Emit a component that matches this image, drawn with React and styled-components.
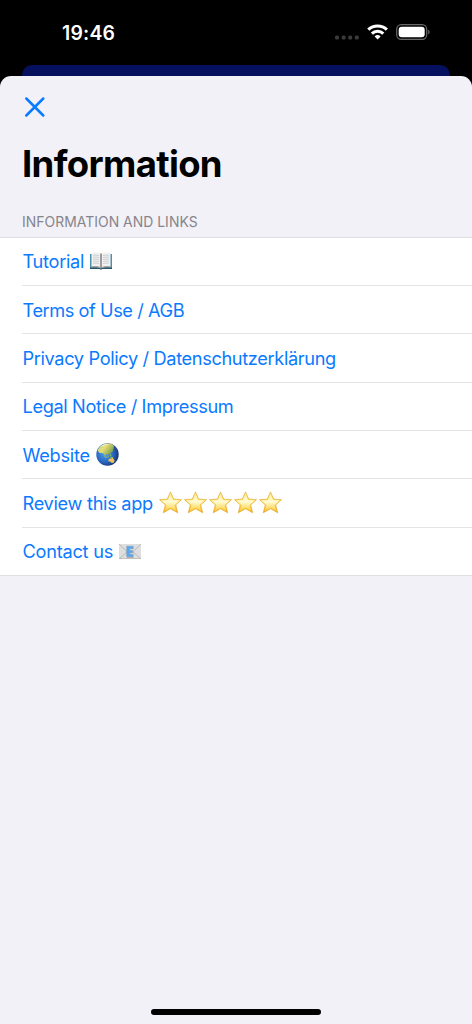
import styled, { createGlobalStyle } from "styled-components";

const GlobalStyle = createGlobalStyle`
  * {
    box-sizing: border-box;
  }
  body {
    margin: 0;
    background: #000;
    font-family: Inter, "Liberation Sans", sans-serif;
  }
`;

const Screen = styled.div`
  height: 1024px;
  display: flex;
  flex-direction: column;
  background: #000;
  overflow: hidden;
`;

const StatusBar = styled.header`
  height: 65px;
  flex: none;
  display: flex;
  align-items: flex-start;
  justify-content: space-between;
  padding: 21px 41px 0 62px;
`;

const Time = styled.span`
  color: #fff;
  font-size: 19.4px;
  font-weight: 600;
  line-height: 24px;
  letter-spacing: 0.2px;
`;

const StatusIcons = styled.svg`
  width: 97px;
  height: 20px;
  margin-top: 1px;
`;

const PreviousPage = styled.div`
  height: 11px;
  flex: none;
  margin: 0 22px;
  background: #05105f;
  border-radius: 10px 10px 0 0;
`;

const Sheet = styled.main`
  flex: 1;
  display: flex;
  flex-direction: column;
  background: #f2f1f7;
  border-radius: 11px 11px 0 0;
`;

const CloseButton = styled.button`
  width: 22px;
  height: 22px;
  margin: 20px 0 0 24px;
  padding: 0;
  border: 0;
  background: none;
  cursor: pointer;

  svg {
    display: block;
  }
`;

const Title = styled.h1`
  margin: 22px 0 0 22px;
  color: #000;
  font-size: 36.5px;
  font-weight: 700;
  line-height: 48px;
  letter-spacing: -0.65px;
`;

const SectionTitle = styled.h2`
  margin: 24px 0 5px 22px;
  color: #85858b;
  font-size: 13.9px;
  font-weight: 400;
  line-height: 20px;
  letter-spacing: 0.04px;
  text-transform: uppercase;
`;

const List = styled.ul`
  margin: 0;
  padding: 0 0 0 22px;
  list-style: none;
  background: #fff;
  border-top: 1px solid #dfdfe3;
  border-bottom: 1px solid #dfdfe3;
`;

const Row = styled.li`
  height: 48.28px;
  display: flex;
  align-items: center;

  &:first-child {
    height: 47.2px;
    padding-bottom: 1px;
  }

  & + & {
    border-top: 1px solid #e4e4e7;
  }
`;

const Link = styled.a`
  display: flex;
  align-items: center;
  gap: 6px;
  padding-left: 0.5px;
  color: #0a7aff;
  font-size: 18.2px;
  line-height: 24px;
  letter-spacing: ${(props) => props.$tracking || -0.25}px;
  white-space: pre;
  text-decoration: none;
  cursor: pointer;

  svg {
    flex: none;
  }
`;

const Stars = styled.span`
  display: flex;
  gap: 2.1px;
`;

const HomeIndicator = styled.div`
  width: 170px;
  height: 6px;
  margin: auto auto 9px 151px;
  border-radius: 3px;
  background: #000;
`;

function BookIcon() {
  return (
    <svg width="22" height="18" viewBox="0 0 22 18">
      <path d="M0 2h22v15H0z" fill="#4c91b0" />
      <path d="M0 15.5h22V17H12.5l-1.5.8-1.5-.8H0z" fill="#28546c" />
      <path d="M1.500 1C5 .3 8.500.3 11 1.600 13.500.3 17 .3 20.500 1v14c-3.500-.4-7-.2-9.500 1-2.500-1.200-6-1.400-9.500-1z" fill="#f1f1f0" />
      <path d="M1.500 14.200c3.500-.4 7-.2 9.500 1 2.500-1.200 6-1.400 9.500-1V15.500c-3.500-.4-7-.2-9.500 1-2.500-1.200-6-1.400-9.500-1z" fill="#a8a49b" />
      <path d="M10.300 1.300l.7.4.7-.4v14l-.7.5-.7-.5z" fill="#77797a" />
      <path
        d="M3 3.200c2-.3 4-.1 6 .4M3 5.200c2-.3 4-.1 6 .4M3 7.200c2-.3 4-.1 6 .4M3 9.200c2-.3 4-.1 6 .4M3 11.200c2-.3 4-.1 6 .4M13 3.600c2-.5 4-.7 6-.4M13 5.600c2-.5 4-.7 6-.4M13 7.600c2-.5 4-.7 6-.4M13 9.600c2-.5 4-.7 6-.4M13 11.600c2-.5 4-.7 6-.4"
        fill="none"
        stroke="#d0d0d3"
        strokeWidth="1"
      />
    </svg>
  );
}

function GlobeIcon() {
  return (
    <svg width="23" height="23" viewBox="0 0 23 23">
      <defs>
        <radialGradient id="ocean" cx="0.38" cy="0.45" r="0.62">
          <stop offset="0" stopColor="#4fa0f0" />
          <stop offset="0.6" stopColor="#2a69c4" />
          <stop offset="1" stopColor="#1a3874" />
        </radialGradient>
        <linearGradient id="land" x1="0" y1="0" x2="1" y2="0.6">
          <stop offset="0" stopColor="#b5d98a" />
          <stop offset="0.45" stopColor="#e6dc7a" />
          <stop offset="1" stopColor="#6f9a45" />
        </linearGradient>
      </defs>
      <circle cx="11.5" cy="11.5" r="11.2" fill="url(#ocean)" />
      <path
        d="M1.600 7.500C3.500 3 7.500.6 11.500.6c3 0 5 .8 6.800 2.300l-.8 1.300.7 1.200-1.300.4.2 2-1.700 2-1.400.5-.6 1.700-1.500-1-1.400.2-1.300 1.800-1.500-2.200L5.500 10 3.200 9.800z"
        fill="url(#land)"
      />
      <path d="M7.800 12.600l1.700 1.500 2.200.3M11.800 12.300l.9 1.500M14.500 11.200l.3 2.200M14.500 14.300l2.200.2" fill="none" stroke="#9cc25a" strokeWidth="1" />
      <path d="M12.300 18.200l.3-2 1.700-1 1.400.3 1-1.200.9 1.900 1.100 1.400-1.300 2.300-2-.1-1.300-1.400z" fill="#edc25a" />
      <path d="M4 4C6.700 1.300 10 .7 13 1.300 9.500 1.900 7 3 4 4z" fill="#fff" opacity="0.6" />
    </svg>
  );
}

function StarIcon() {
  return (
    <svg width="23" height="23" viewBox="0 0 23 23">
      <defs>
        <linearGradient id="gold" x1="0" y1="0" x2="0" y2="1">
          <stop offset="0" stopColor="#ffe48a" />
          <stop offset="0.5" stopColor="#ffe262" />
          <stop offset="1" stopColor="#f5a914" />
        </linearGradient>
        <linearGradient id="shine" x1="0" y1="0" x2="0" y2="1">
          <stop offset="0" stopColor="#fff0a8" />
          <stop offset="0.45" stopColor="#fffbd4" />
          <stop offset="1" stopColor="#ffcf38" />
        </linearGradient>
      </defs>
      <path
        d="M11.500.9l3.200 7.200 7.800.6-5.800 5.200 2 7.900-7.200-4.100-7.200 4.100 2-7.900L.5 8.700l7.800-.6z"
        fill="url(#gold)"
        stroke="#e3aa3a"
        strokeWidth="0.7"
        strokeLinejoin="round"
      />
      <path d="M11.500 3.200l2.500 5.900 6.500.5-4.900 4.300 1.600 6.100-5.700-3.300-5.700 3.300 1.600-6.100-4.900-4.300 6.500-.5z" fill="url(#shine)" />
    </svg>
  );
}

function EmailIcon() {
  return (
    <svg width="22" height="15" viewBox="0 0 22 15">
      <path d="M0 0h22v15H0z" fill="#dededf" />
      <path d="M0 14h22v1H0z" fill="#c1c1c3" />
      <path d="M0 0l9 8.500h4L22 0M0 15l8-7M22 15l-8-7" fill="none" stroke="#b6b6b8" strokeWidth="0.9" />
      <path d="M8 12.800h6.500v.8H8z" fill="#77797c" opacity="0.7" />
      <path d="M7.700 2.200h6.500v2.500h-3.500v1.700h3v2.200h-3v1.700h3.500v2.500H7.700z" fill="#58a9f0" stroke="#7f97ad" strokeWidth="0.5" />
    </svg>
  );
}

function StatusGlyphs() {
  return (
    <StatusIcons viewBox="0 0 97 20">
      <g fill="#3b3b3d">
        <rect x="1" y="13.5" width="4" height="4" rx="1.5" />
        <rect x="7.6" y="13.5" width="4" height="4" rx="1.5" />
        <rect x="14.2" y="13.5" width="4" height="4" rx="1.5" />
        <rect x="20.8" y="13.5" width="4" height="4" rx="1.5" />
      </g>
      <g fill="none" stroke="#fff" strokeWidth="3.1">
        <path d="M34.300 7.700a13.400 13.400 0 0 1 18.600 0" />
        <path d="M37.900 11.600a8.200 8.200 0 0 1 11.400 0" />
      </g>
      <path d="M43.600 17.600l-3-3.200a4.400 4.400 0 0 1 6 0z" fill="#fff" />
      <rect x="62.7" y="2.7" width="30" height="14.6" rx="4.6" fill="none" stroke="#68686a" strokeWidth="1.2" />
      <rect x="64.7" y="4.7" width="26" height="10.6" rx="3" fill="#fff" />
      <path d="M94.300 7.700c1.600.6 1.600 4 0 4.600z" fill="#77777a" />
    </StatusIcons>
  );
}

function App() {
  return (
    <Screen>
      <GlobalStyle />
      <StatusBar>
        <Time>19:46</Time>
        <StatusGlyphs />
      </StatusBar>
      <PreviousPage />
      <Sheet>
        <CloseButton aria-label="Close">
          <svg width="22" height="22" viewBox="0 0 22 22">
            <path d="M2.300 2.500l17 17M19.300 2.500l-17 17" stroke="#0a7aff" strokeWidth="2.5" strokeLinecap="round" />
          </svg>
        </CloseButton>
        <Title>Information</Title>
        <SectionTitle>Information and Links</SectionTitle>
        <List>
          <Row>
            <Link $tracking={-0.3}>
              Tutorial
              <BookIcon />
            </Link>
          </Row>
          <Row>
            <Link $tracking={-0.43}>Terms of Use / AGB</Link>
          </Row>
          <Row>
            <Link $tracking={-0.36}>Privacy Policy / Datenschutzerklärung</Link>
          </Row>
          <Row>
            <Link $tracking={-0.36}>Legal Notice / Impressum</Link>
          </Row>
          <Row>
            <Link>
              Website
              <GlobeIcon />
            </Link>
          </Row>
          <Row>
            <Link $tracking={-0.3}>
              Review this app
              <Stars>
                <StarIcon />
                <StarIcon />
                <StarIcon />
                <StarIcon />
                <StarIcon />
              </Stars>
            </Link>
          </Row>
          <Row>
            <Link>
              Contact us
              <EmailIcon />
            </Link>
          </Row>
        </List>
        <HomeIndicator />
      </Sheet>
    </Screen>
  );
}

export default App;
